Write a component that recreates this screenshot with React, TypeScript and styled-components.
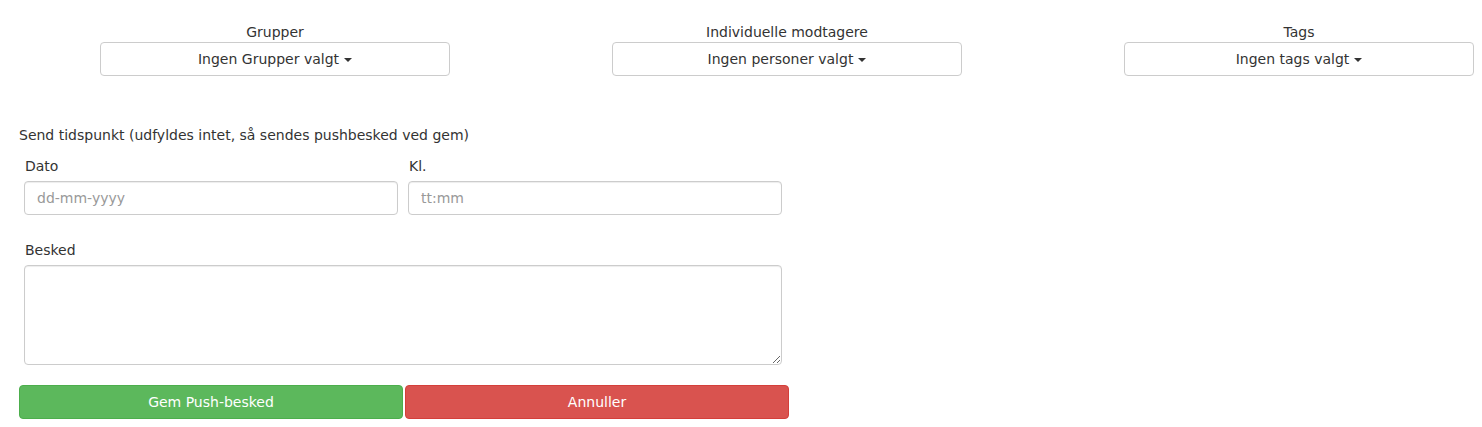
import React from "react";
import styled, { createGlobalStyle } from "styled-components";

const GlobalStyle = createGlobalStyle`
  html, body {
    margin: 0;
    padding: 0;
    background: #fff;
  }
  body {
    font-family: "DejaVu Sans", Verdana, sans-serif;
    font-size: 14px;
    color: #333;
  }
  * {
    box-sizing: border-box;
  }
`;

const Page = styled.div`
  width: 1482px;
  height: 427px;
  overflow: hidden;
`;

const RecipientRow = styled.div`
  display: flex;
  gap: 162px;
  padding: 22px 0 0 100px;
`;

const RecipientCol = styled.div`
  width: 350px;
  display: flex;
  flex-direction: column;
  align-items: center;
`;

const ColLabel = styled.div`
  height: 20px;
  line-height: 20px;
  text-align: center;
`;

const DropdownButton = styled.button`
  width: 100%;
  height: 34px;
  border: 1px solid #ccc;
  border-radius: 4px;
  background: #fff;
  color: #333;
  font: inherit;
  display: flex;
  align-items: center;
  justify-content: center;
  gap: 5px;
  cursor: pointer;
`;

const Caret = styled.span`
  display: inline-block;
  width: 0;
  height: 0;
  border-top: 4px solid #333;
  border-left: 4px solid transparent;
  border-right: 4px solid transparent;
  margin-top: 1px;
`;

const Form = styled.div`
  width: 790px;
  padding: 49px 0 0 19px;
`;

const SectionTitle = styled.div`
  height: 20px;
  line-height: 20px;
`;

const FieldGrid = styled.div`
  display: grid;
  grid-template-columns: 374px 374px;
  column-gap: 10px;
  padding: 11px 0 0 5px;
`;

const Field = styled.div<{ $wide?: boolean }>`
  display: flex;
  flex-direction: column;
  grid-column: ${(p) => (p.$wide ? "1 / span 2" : "auto")};
  margin-top: ${(p) => (p.$wide ? "25px" : "0")};
`;

const FieldLabel = styled.label`
  height: 20px;
  line-height: 20px;
  padding-left: 1px;
  margin-bottom: 5px;
`;

const TextInput = styled.input`
  height: 34px;
  border: 1px solid #ccc;
  border-radius: 4px;
  padding: 0 12px;
  font: inherit;
  color: #555;
  box-shadow: inset 0 1px 1px rgba(0, 0, 0, 0.075);
  &::placeholder {
    color: #999;
  }
`;

const TextArea = styled.textarea`
  height: 100px;
  border: 1px solid #ccc;
  border-radius: 4px;
  padding: 6px 12px;
  font: inherit;
  box-shadow: inset 0 1px 1px rgba(0, 0, 0, 0.075);
`;

const Actions = styled.div`
  display: flex;
  gap: 2px;
  margin-top: 20px;
`;

const ActionButton = styled.button<{ $variant: "save" | "cancel" }>`
  width: 384px;
  height: 34px;
  border-radius: 4px;
  border: 1px solid ${(p) => (p.$variant === "save" ? "#4cae4c" : "#d43f3a")};
  background: ${(p) => (p.$variant === "save" ? "#5cb85c" : "#d9534f")};
  color: #fff;
  font: inherit;
  cursor: pointer;
`;

const recipients = [
  { label: "Grupper", value: "Ingen Grupper valgt" },
  { label: "Individuelle modtagere", value: "Ingen personer valgt" },
  { label: "Tags", value: "Ingen tags valgt" },
];

export default function App() {
  return (
    <Page>
      <GlobalStyle />
      <RecipientRow>
        {recipients.map((r) => (
          <RecipientCol key={r.label}>
            <ColLabel>{r.label}</ColLabel>
            <DropdownButton>
              {r.value}
              <Caret />
            </DropdownButton>
          </RecipientCol>
        ))}
      </RecipientRow>
      <Form>
        <SectionTitle>Send tidspunkt (udfyldes intet, så sendes pushbesked ved gem)</SectionTitle>
        <FieldGrid>
          <Field>
            <FieldLabel>Dato</FieldLabel>
            <TextInput placeholder="dd-mm-yyyy" />
          </Field>
          <Field>
            <FieldLabel>Kl.</FieldLabel>
            <TextInput placeholder="tt:mm" />
          </Field>
          <Field $wide>
            <FieldLabel>Besked</FieldLabel>
            <TextArea />
          </Field>
        </FieldGrid>
        <Actions>
          <ActionButton $variant="save">Gem Push-besked</ActionButton>
          <ActionButton $variant="cancel">Annuller</ActionButton>
        </Actions>
      </Form>
    </Page>
  );
}
